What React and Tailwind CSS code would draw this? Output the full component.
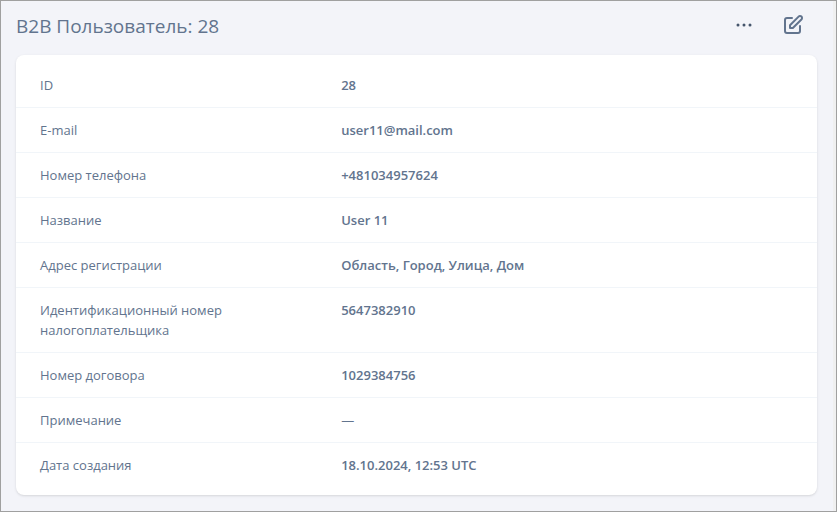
import React from "react";

const fields = [
  { label: "ID", value: "28" },
  { label: "E-mail", value: "user11@mail.com" },
  { label: "Номер телефона", value: "+481034957624" },
  { label: "Название", value: "User 11" },
  { label: "Адрес регистрации", value: "Область, Город, Улица, Дом" },
  { label: "Идентификационный номер налогоплательщика", value: "5647382910" },
  { label: "Номер договора", value: "1029384756" },
  { label: "Примечание", value: "" },
  { label: "Дата создания", value: "18.10.2024, 12:53 UTC" },
];

function DotsIcon() {
  return (
    <svg className="w-6 h-6" viewBox="0 0 24 24" fill="none" stroke="currentColor" strokeWidth="1.5" strokeLinecap="round" strokeLinejoin="round">
      <path d="M6.75 12a.75.75 0 11-1.5 0 .75.75 0 011.5 0zM12.75 12a.75.75 0 11-1.5 0 .75.75 0 011.5 0zM18.75 12a.75.75 0 11-1.5 0 .75.75 0 011.5 0z" />
    </svg>
  );
}

function EditIcon() {
  return (
    <svg className="w-6 h-6" viewBox="0 0 24 24" fill="none" stroke="currentColor" strokeWidth="2" strokeLinecap="round" strokeLinejoin="round">
      <path d="M11 5H6a2 2 0 00-2 2v11a2 2 0 002 2h11a2 2 0 002-2v-5m-1.414-9.414a2 2 0 112.828 2.828L11.828 15H9v-2.828l8.586-8.586z" />
    </svg>
  );
}

export default function UserDetail() {
  return (
    <div className="flex min-h-screen border border-[#a0a0a0] bg-[#f3f4f9] text-slate-500 font-['Open_Sans',sans-serif]">
      <main className="flex-1 min-w-0 pt-1.5 pr-4 pb-4 pl-[15px]">
        {/* HEADER */}
        <header className="flex items-center justify-between mb-3">
          <h1 className="text-[19px] leading-7 pt-0.5">B2B Пользователь: 28</h1>

          <div className="flex gap-[13px] pr-1.5">
            <button type="button" aria-label="Действия" className="w-9 h-9 flex items-center justify-center text-slate-600">
              <DotsIcon />
            </button>
            <button type="button" aria-label="Редактировать" className="w-9 h-9 flex items-center justify-center">
              <EditIcon />
            </button>
          </div>
        </header>

        {/* DETAILS */}
        <dl className="bg-white rounded-lg shadow-sm py-2 divide-y divide-slate-100 text-[13px] leading-5">
          {fields.map((f) => (
            <div key={f.label} className="flex px-6 py-3">
              <dt className="w-2/5 pr-8">{f.label}</dt>
              <dd className={f.value ? "w-3/5 font-semibold" : "w-3/5"}>
                {f.value || "—"}
              </dd>
            </div>
          ))}
        </dl>
      </main>

      {/* right edge */}
      <div className="w-[3px] bg-[#f0f0f0]" />
    </div>
  );
}
